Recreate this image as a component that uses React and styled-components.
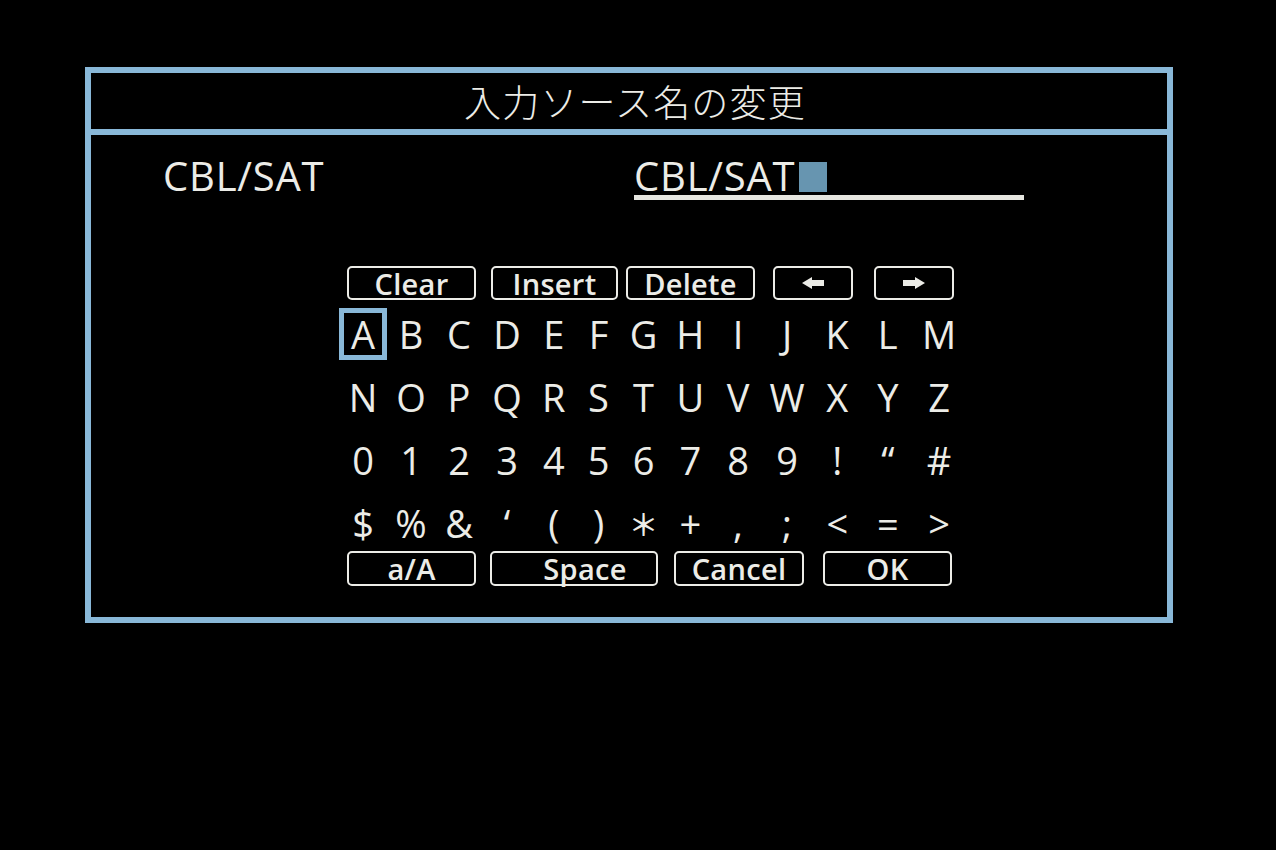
import React from 'react';
import styled, { createGlobalStyle } from 'styled-components';

const GlobalStyle = createGlobalStyle`
  html, body {
    margin: 0;
    padding: 0;
    background: #000;
  }
  body {
    font-family: 'Open Sans', 'Noto Sans CJK JP', sans-serif;
    color: #ededE8;
  }
`;

const BLUE = '#89b8d8';
const INK = '#ecece7';

// column widths of the character grid, tuned so glyph centres line up
const COLS = [48, 48, 48, 48, 45.5, 44, 46, 47.5, 48, 50, 50.5, 50.5, 52];

const Screen = styled.div`
  width: 1276px;
  height: 850px;
  padding: 67px 0 0 85px;
  box-sizing: border-box;
`;

const Frame = styled.div`
  width: 1088px;
  height: 556px;
  box-sizing: border-box;
  border: 6px solid ${BLUE};
  display: flex;
  flex-direction: column;
`;

const Header = styled.div`
  height: 56px;
  border-bottom: 6px solid ${BLUE};
  display: flex;
  align-items: center;
  justify-content: center;
  padding-left: 12px;
  font-family: 'Noto Sans CJK JP', sans-serif;
  font-size: 37px;
  font-weight: 300;
  color: ${INK};
  letter-spacing: 1.2px;
`;

const NameRow = styled.div`
  display: flex;
  padding: 22px 0 0 72px;
`;

const NameLabel = styled.div`
  width: 471px;
  font-size: 40px;
  font-weight: 380;
  line-height: 38px;
  letter-spacing: 0.8px;
  color: ${INK};
`;

const NameField = styled(NameLabel)`
  width: 390px;
  border-bottom: 5px solid #e6e6e0;
  white-space: nowrap;
`;

const Cursor = styled.span`
  display: inline-block;
  width: 28px;
  height: 30px;
  margin-left: 4px;
  vertical-align: -1px;
  background: #6795b0;
`;

const Keyboard = styled.div`
  margin: 66px 0 0 248px;
  width: 626px;
  display: flex;
  flex-direction: column;
`;

const ButtonRow = styled.div`
  display: flex;
  padding-left: 8px;
  margin-top: ${({ $offset }) => $offset || 0}px;
`;

const Key = styled.div`
  box-sizing: border-box;
  width: ${({ $w }) => $w}px;
  height: ${({ $h }) => $h || 34}px;
  margin-left: ${({ $gap }) => $gap || 0}px;
  border: 2.5px solid ${INK};
  border-radius: 5px;
  display: flex;
  align-items: center;
  justify-content: center;
  padding-left: ${({ $shift }) => $shift || 0}px;
  font-size: 29px;
  font-weight: 600;
  letter-spacing: 0.3px;
  line-height: 1;
  color: ${INK};
`;

const CharGrid = styled.div`
  display: grid;
  grid-template-columns: ${COLS.map((w) => `${w}px`).join(' ')};
  grid-auto-rows: 63px;
  margin-top: 2px;
`;

const Cell = styled.div`
  display: flex;
  align-items: center;
  justify-content: center;
  font-size: 38px;
  font-weight: 380;
  color: ${INK};
  line-height: 1;
`;

const Star = styled.span`
  font-family: 'Noto Sans CJK JP', sans-serif;
  font-size: 30px;
  font-weight: 500;
`;

const Focus = styled.div`
  box-sizing: border-box;
  width: 48px;
  height: 52px;
  border: 5px solid ${BLUE};
  display: flex;
  align-items: center;
  justify-content: center;
`;

const Arrow = ({ dir }) => (
  <svg width="22" height="12" viewBox="0 0 22 12">
    <g transform={dir === 'right' ? 'translate(22 0) scale(-1 1)' : undefined}>
      <path d="M0 6 L10 0 L10 3 L22 3 L22 9 L10 9 L10 12 Z" fill={INK} />
    </g>
  </svg>
);

const rows = [
  'ABCDEFGHIJKLM'.split(''),
  'NOPQRSTUVWXYZ'.split(''),
  ['0', '1', '2', '3', '4', '5', '6', '7', '8', '9', '!', '\u201C', '#'],
  ['$', '%', '&', '\u2018', '(', ')', '\uFF0A', '+', ',', ';', '<', '=', '>'],
];

const renderChar = (ch) => (ch === '\uFF0A' ? <Star>{ch}</Star> : ch);

export default function App() {
  return (
    <>
      <GlobalStyle />
      <Screen>
        <Frame>
          <Header>入力ソース名の変更</Header>
          <NameRow>
            <NameLabel>CBL/SAT</NameLabel>
            <NameField>
              CBL/SAT
              <Cursor />
            </NameField>
          </NameRow>
          <Keyboard>
            <ButtonRow>
              <Key $w={129}>Clear</Key>
              <Key $w={127} $gap={15}>Insert</Key>
              <Key $w={129} $gap={8}>Delete</Key>
              <Key $w={80} $gap={18}><Arrow dir="left" /></Key>
              <Key $w={80} $gap={21}><Arrow dir="right" /></Key>
            </ButtonRow>
            <CharGrid>
              {rows.map((row, r) =>
                row.map((ch, c) => (
                  <Cell key={`${r}-${c}`}>
                    {r === 0 && c === 0 ? <Focus>{ch}</Focus> : renderChar(ch)}
                  </Cell>
                ))
              )}
            </CharGrid>
            <ButtonRow $offset={-3}>
              <Key $w={129} $h={35}>a/A</Key>
              <Key $w={168} $h={35} $gap={14} $shift={22}>Space</Key>
              <Key $w={130} $h={35} $gap={16}>Cancel</Key>
              <Key $w={129} $h={35} $gap={19}>OK</Key>
            </ButtonRow>
          </Keyboard>
        </Frame>
      </Screen>
    </>
  );
}
